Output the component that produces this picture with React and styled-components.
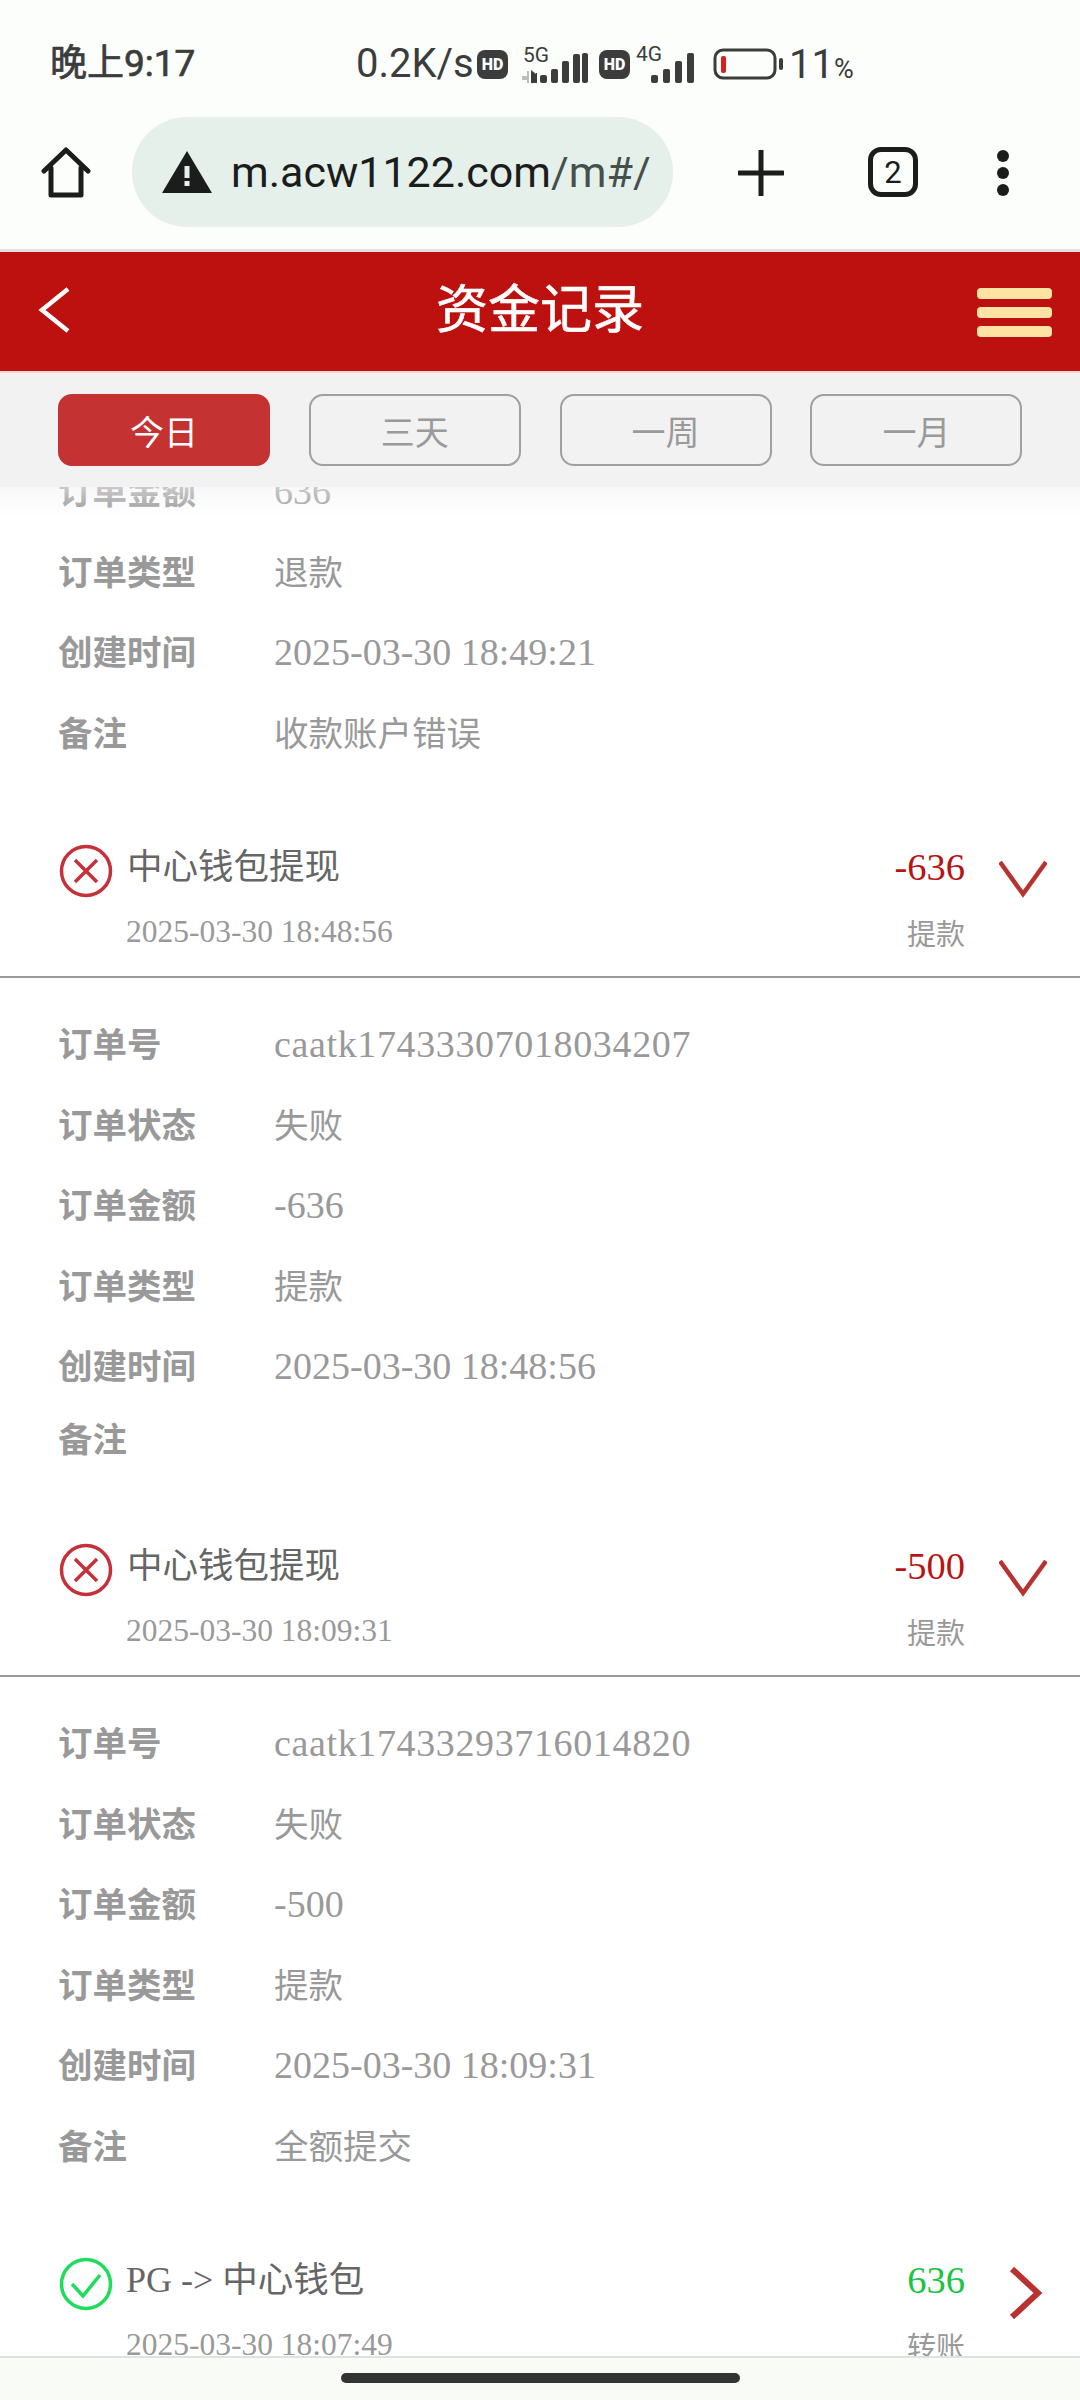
import React from "react";
import styled, { createGlobalStyle } from "styled-components";

const SANS = `"Noto Sans CJK SC", "Noto Sans", sans-serif`;
const SERIF = `"Liberation Serif", "Noto Sans CJK SC", serif`;

const GlobalStyle = createGlobalStyle`
    html, body {
        margin: 0;
        padding: 0;
        background: #fff;
    }
    * {
        box-sizing: border-box;
    }
`;

const Page = styled.div`
    width: 1080px;
    height: 2400px;
    display: flex;
    flex-direction: column;
    overflow: hidden;
    background: #fff;
    font-family: ${SANS};
`;

const Chrome = styled.div`
    background: #fbfefa;
    border-bottom: 3px solid #e2e3e0;
    flex-shrink: 0;
`;

const StatusBar = styled.div`
    height: 117px;
    padding: 44px 0 0 50px;
    display: flex;
    align-items: flex-start;
    color: #3c3c3c;
`;

const StatusTime = styled.span`
    width: 306px;
    font-family: Roboto, ${SANS};
    font-size: 37px;
    line-height: 40px;
    font-weight: 400;
    -webkit-text-stroke: 0.7px #3c3c3c;
`;

const StatusCluster = styled.div`
    display: flex;
    align-items: center;
    height: 40px;
`;

const Speed = styled.span`
    font-family: Roboto, sans-serif;
    font-size: 40px;
    line-height: 40px;
    width: 121px;
`;

const HdBadge = styled.span`
    width: 31px;
    height: 29px;
    border-radius: 8px;
    background: #3c3c3c;
    color: #fbfefa;
    font-family: Roboto, sans-serif;
    font-size: 16px;
    font-weight: 900;
    display: flex;
    align-items: center;
    justify-content: center;
    margin-right: ${props => props.$gap}px;
`;

const Percent = styled.span`
    font-family: Roboto, sans-serif;
    font-size: 40px;
    line-height: 40px;
    margin-left: 4px;
    margin-top: 5px;

    small {
        font-size: 27px;
    }
`;

const AddressBar = styled.div`
    height: 132px;
    display: flex;
    align-items: flex-start;
    padding-left: 41px;
    color: #1a1d1c;
`;

const HomeIcon = styled.svg`
    width: 50px;
    height: 52px;
    margin: 29px 41px 0 0;
    flex-shrink: 0;
`;

const UrlPill = styled.div`
    width: 541px;
    height: 110px;
    border-radius: 55px;
    background: #e6f0ea;
    display: flex;
    align-items: center;
    padding-left: 30px;
    flex-shrink: 0;
`;

const UrlText = styled.span`
    font-family: Roboto, sans-serif;
    font-size: 43px;
    margin-left: 19px;
    white-space: nowrap;

    em {
        font-style: normal;
        color: #45504c;
    }
`;

const PlusIcon = styled.svg`
    width: 46px;
    height: 46px;
    margin: 33px 84px 0 65px;
    flex-shrink: 0;
`;

const TabCount = styled.div`
    width: 50px;
    height: 50px;
    margin-top: 30px;
    border: 5px solid #1a1d1c;
    border-radius: 13px;
    font-family: Roboto, sans-serif;
    font-size: 31px;
    display: flex;
    align-items: center;
    justify-content: center;
    flex-shrink: 0;
`;

const DotsIcon = styled.svg`
    width: 14px;
    height: 46px;
    margin: 33px 0 0 78px;
    flex-shrink: 0;
`;

const Header = styled.header`
    height: 121px;
    flex-shrink: 0;
    background: #bc110e;
    border-bottom: 2px solid #f4d5d3;
    display: flex;
    align-items: center;
    justify-content: space-between;
    padding: 0 28px 0 38px;
    position: relative;
`;

const HeaderTitle = styled.h1`
    position: absolute;
    left: 0;
    right: 0;
    top: 0;
    margin: 0;
    text-align: center;
    font-size: 52px;
    line-height: 108px;
    font-weight: 400;
    color: #fff;
    -webkit-text-stroke: 0.6px #fff;
`;

const BackIcon = styled.svg`
    width: 32px;
    height: 46px;
    margin-bottom: 4px;
`;

const Burger = styled.div`
    width: 75px;
    display: flex;
    flex-direction: column;
    gap: 8px;
    margin-top: 2px;
`;

const BurgerLine = styled.span`
    height: 11px;
    border-radius: 4px;
    background: #ffe3a5;
`;

const FilterBar = styled.nav`
    height: 114px;
    flex-shrink: 0;
    padding: 21px 58px 0;
    background: #f2f2f2;
    display: grid;
    grid-template-columns: repeat(4, 212px);
    column-gap: 38.8px;
    align-content: start;
    position: relative;
    z-index: 2;

    &::after {
        content: "";
        position: absolute;
        left: 0;
        right: 0;
        top: 100%;
        height: 30px;
        background: linear-gradient(rgba(242, 242, 242, 0.55), rgba(255, 255, 255, 0));
    }
`;

const FilterButton = styled.button`
    height: 72px;
    padding: 0;
    border-radius: 14px;
    border: 2px solid ${props => (props.$active ? "#c43232" : "#a0a0a0")};
    background: ${props => (props.$active ? "#c43232" : "transparent")};
    color: ${props => (props.$active ? "#fff" : "#9a9a9a")};
    font-family: ${SANS};
    font-size: 34px;
`;

const Scroller = styled.main`
    flex: 1;
    min-height: 0;
    overflow: hidden;
`;

const List = styled.div`
    margin-top: -38px;
`;

const Details = styled.section`
    padding-top: ${props => (props.$first ? 0 : 24)}px;
`;

const DetailRow = styled.div`
    height: ${props => (props.$empty ? 65.5 : 80.5)}px;
    padding-left: 58px;
    display: flex;
    align-items: center;
`;

const DetailLabel = styled.span`
    width: 216px;
    font-size: 34.5px;
    font-weight: 700;
    color: #999;
    flex-shrink: 0;
`;

const DetailValue = styled.span`
    font-family: ${props => (props.$cjk ? SANS : SERIF)};
    font-size: ${props => (props.$cjk ? 34.5 : 38)}px;
    margin-top: ${props => (props.$cjk ? 0 : 3)}px;
    letter-spacing: ${props => (props.$wide ? 0.63 : 0)}px;
    color: #999;
    white-space: nowrap;
`;

const RecordHead = styled.div`
    height: ${props => (props.$open ? 207 : 205)}px;
    padding: 69px 33px 0 59px;
    display: grid;
    grid-template-columns: 1fr auto 82px;
    grid-template-rows: 50px 63px;
    row-gap: 22px;
    border-bottom: ${props => (props.$open ? "2px solid #999" : "none")};
`;

const TitleLine = styled.div`
    display: flex;
    align-items: center;
    gap: ${props => props.$gap}px;
`;

const StatusIcon = styled.svg`
    width: 54px;
    height: 54px;
    margin-top: 11px;
    flex-shrink: 0;
`;

const RecordTitle = styled.span`
    font-family: ${SERIF};
    font-size: 36px;
    line-height: 50px;
    color: #666;
    white-space: nowrap;

    b {
        font-family: ${SANS};
        font-size: 35.5px;
        font-weight: 400;
    }
`;

const Amount = styled.span`
    font-family: ${SERIF};
    font-size: 38.5px;
    line-height: 50px;
    padding-top: 2px;
    text-align: right;
    color: ${props => (props.$plus ? "#1cc443" : "#b81414")};
`;

const Arrow = styled.svg`
    width: 48px;
    height: 52px;
    justify-self: end;
    margin-top: ${props => props.$top}px;
    grid-row: 1 / 3;
    grid-column: 3;
`;

const RecordDate = styled.span`
    font-family: ${SERIF};
    font-size: 31.5px;
    line-height: 40px;
    color: #999;
    padding-left: 67px;
    white-space: nowrap;
`;

const RecordType = styled.span`
    font-size: 29px;
    line-height: 40px;
    color: #999;
    text-align: right;
`;

const BottomBar = styled.footer`
    height: 44px;
    flex-shrink: 0;
    background: #f9fbf6;
    border-top: 2px solid #dde3df;
    display: flex;
    justify-content: center;
    padding-top: 15px;
`;

const HomeIndicator = styled.span`
    width: 399px;
    height: 10px;
    border-radius: 5px;
    background: #333;
`;

const StatusBarIcons = () => (
    <StatusCluster>
        <Speed>0.2K/s</Speed>
        <HdBadge $gap={12}>HD</HdBadge>
        <svg width="68" height="38" viewBox="0 0 68 38">
            <text x="3" y="17" fontFamily="Roboto, sans-serif" fontSize="21" fill="#3c3c3c">5G</text>
            <path d="M2 31h5v-5h2v12h-2v-3H2z" fill="#bdbdbd" />
            <path d="M11 25l5 4v-1h1v10h-6z" fill="#3c3c3c" />
            <rect x="20" y="30" width="7" height="8" rx="2" fill="#3c3c3c" />
            <rect x="31" y="24" width="7" height="14" rx="2" fill="#3c3c3c" />
            <rect x="42" y="16" width="7" height="22" rx="2" fill="#3c3c3c" />
            <rect x="53" y="9" width="7" height="29" rx="2" fill="#3c3c3c" />
            <rect x="62" y="8" width="6" height="30" rx="2" fill="#3c3c3c" />
        </svg>
        <span style={{ width: 11 }} />
        <HdBadge $gap={5}>HD</HdBadge>
        <svg width="64" height="38" viewBox="0 0 64 38">
            <text x="1" y="16" fontFamily="Roboto, sans-serif" fontSize="21" fill="#3c3c3c">4G</text>
            <rect x="16" y="30" width="7" height="8" rx="2" fill="#3c3c3c" />
            <rect x="28" y="24" width="7" height="14" rx="2" fill="#3c3c3c" />
            <rect x="40" y="16" width="7" height="22" rx="2" fill="#3c3c3c" />
            <rect x="52" y="8" width="7" height="30" rx="2" fill="#3c3c3c" />
        </svg>
        <svg width="72" height="32" viewBox="0 0 72 32" style={{ marginLeft: 14 }}>
            <rect x="2" y="2" width="60" height="28" rx="8" fill="none" stroke="#3c3c3c" strokeWidth="3" />
            <rect x="8" y="8" width="5" height="17" rx="2" fill="#d92020" />
            <rect x="66" y="10" width="4" height="12" rx="2" fill="#3c3c3c" />
        </svg>
        <Percent>11<small>%</small></Percent>
    </StatusCluster>
);

const AddressRow = () => (
    <AddressBar>
        <HomeIcon viewBox="0 0 50 52">
            <path d="M3 25 25 4l22 21M10 22v27h30V22" fill="none" stroke="#1a1d1c" strokeWidth="5" strokeLinejoin="round" strokeLinecap="round" />
        </HomeIcon>
        <UrlPill>
            <svg width="50" height="44" viewBox="0 0 50 44" style={{ flexShrink: 0 }}>
                <path d="M25 1 50 43H0z" fill="#1a1d1c" />
                <rect x="22.5" y="16" width="5" height="12" fill="#e6f0ea" />
                <rect x="22.5" y="31" width="5" height="5" fill="#e6f0ea" />
            </svg>
            <UrlText>m.acw1122.com<em>/m#/</em></UrlText>
        </UrlPill>
        <PlusIcon viewBox="0 0 46 46">
            <path d="M23 1v44M1 23h44" stroke="#1a1d1c" strokeWidth="5" strokeLinecap="round" />
        </PlusIcon>
        <TabCount>2</TabCount>
        <DotsIcon viewBox="0 0 14 46">
            <circle cx="7" cy="6" r="6" fill="#1a1d1c" />
            <circle cx="7" cy="23" r="6" fill="#1a1d1c" />
            <circle cx="7" cy="40" r="6" fill="#1a1d1c" />
        </DotsIcon>
    </AddressBar>
);

const FailIcon = () => (
    <StatusIcon viewBox="0 0 54 54">
        <circle cx="27" cy="27" r="24.5" fill="none" stroke="#c5303a" strokeWidth="3.5" />
        <path d="M16 16l22 22M38 16 16 38" stroke="#c5303a" strokeWidth="3.5" />
    </StatusIcon>
);

const OkIcon = () => (
    <StatusIcon viewBox="0 0 54 54">
        <circle cx="27" cy="27" r="24.5" fill="none" stroke="#1fdc5c" strokeWidth="3.5" />
        <path d="M13 27l11 12 17-21" fill="none" stroke="#1fdc5c" strokeWidth="3.5" />
    </StatusIcon>
);

const ArrowDown = () => (
    <Arrow $top={20} viewBox="0 0 48 52">
        <path d="M1 2l23 32L47 2" fill="none" stroke="#b83232" strokeWidth="4.5" />
    </Arrow>
);

const ArrowRight = () => (
    <Arrow $top={14} viewBox="0 0 48 52">
        <path d="M13 2l26 24-26 24" fill="none" stroke="#b83232" strokeWidth="6" />
    </Arrow>
);

const Detail = ({ label, value, cjk, wide }) => (
    <DetailRow $empty={!value}>
        <DetailLabel>{label}</DetailLabel>
        {value && <DetailValue $cjk={cjk} $wide={wide}>{value}</DetailValue>}
    </DetailRow>
);

const records = [
    {
        title: "中心钱包提现",
        date: "2025-03-30 18:48:56",
        amount: "-636",
        type: "提款",
        orderNo: "caatk17433307018034207",
        created: "2025-03-30 18:48:56",
        note: "",
    },
    {
        title: "中心钱包提现",
        date: "2025-03-30 18:09:31",
        amount: "-500",
        type: "提款",
        orderNo: "caatk17433293716014820",
        created: "2025-03-30 18:09:31",
        note: "全额提交",
    },
];

const filters = ["今日", "三天", "一周", "一月"];

const App = () => (
    <Page>
        <GlobalStyle />
        <Chrome>
            <StatusBar>
                <StatusTime>晚上9:17</StatusTime>
                <StatusBarIcons />
            </StatusBar>
            <AddressRow />
        </Chrome>
        <Header>
            <BackIcon viewBox="0 0 32 46">
                <path d="M30 2 4 23l26 21" fill="none" stroke="#fff" strokeWidth="4.5" />
            </BackIcon>
            <HeaderTitle>资金记录</HeaderTitle>
            <Burger>
                <BurgerLine />
                <BurgerLine />
                <BurgerLine />
            </Burger>
        </Header>
        <FilterBar>
            {filters.map((f, i) => (
                <FilterButton key={f} $active={i === 0}>{f}</FilterButton>
            ))}
        </FilterBar>
        <Scroller>
            <List>
                <Details $first>
                    <Detail label="订单金额" value="636" />
                    <Detail label="订单类型" value="退款" cjk />
                    <Detail label="创建时间" value="2025-03-30 18:49:21" />
                    <Detail label="备注" value="收款账户错误" cjk />
                </Details>
                {records.map(r => (
                    <React.Fragment key={r.orderNo}>
                        <RecordHead $open>
                            <TitleLine $gap={14}>
                                <FailIcon />
                                <RecordTitle><b>{r.title}</b></RecordTitle>
                            </TitleLine>
                            <Amount>{r.amount}</Amount>
                            <ArrowDown />
                            <RecordDate>{r.date}</RecordDate>
                            <RecordType>{r.type}</RecordType>
                        </RecordHead>
                        <Details>
                            <Detail label="订单号" value={r.orderNo} wide />
                            <Detail label="订单状态" value="失败" cjk />
                            <Detail label="订单金额" value={r.amount} />
                            <Detail label="订单类型" value={r.type} cjk />
                            <Detail label="创建时间" value={r.created} />
                            <Detail label="备注" value={r.note} cjk />
                        </Details>
                    </React.Fragment>
                ))}
                <RecordHead>
                    <TitleLine $gap={13}>
                        <OkIcon />
                        <RecordTitle>PG -&gt; <b>中心钱包</b></RecordTitle>
                    </TitleLine>
                    <Amount $plus>636</Amount>
                    <ArrowRight />
                    <RecordDate>2025-03-30 18:07:49</RecordDate>
                    <RecordType>转账</RecordType>
                </RecordHead>
            </List>
        </Scroller>
        <BottomBar>
            <HomeIndicator />
        </BottomBar>
    </Page>
);

export default App;
